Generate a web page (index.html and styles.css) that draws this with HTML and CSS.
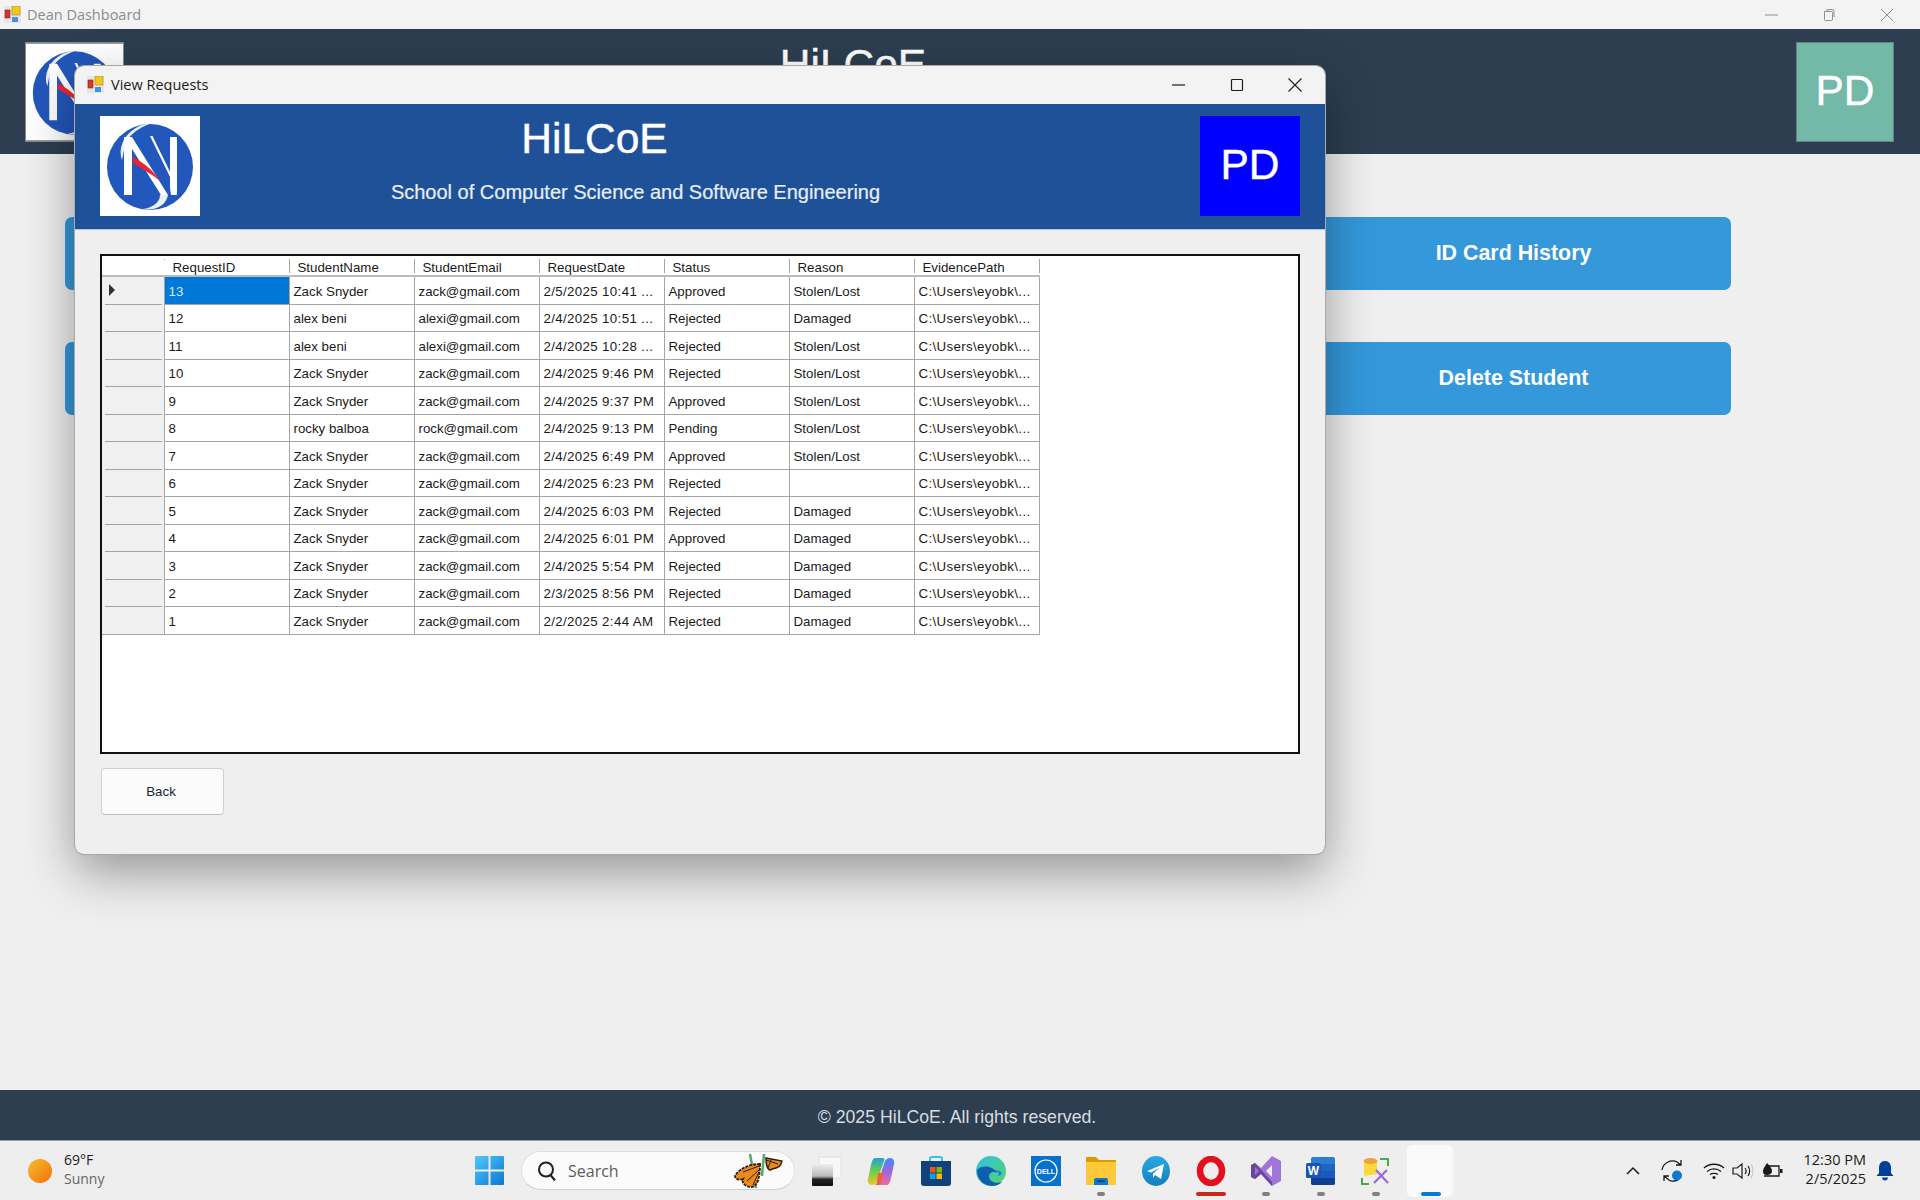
FILE: index.html
```html
<!DOCTYPE html>
<html lang="en">
<head>
<meta charset="utf-8">
<title>Dean Dashboard</title>
<link rel="stylesheet" href="styles.css">
</head>
<body>
<svg class="defs" width="0" height="0" aria-hidden="true">
  <symbol id="logo" viewBox="0 0 100 100">
    <rect width="100" height="100" fill="#fff"/>
    <ellipse cx="50" cy="51" rx="43" ry="43" fill="#2257bb"/>
    <path d="M22 44C16 26 32 8 52 7C38 12 26 20 24 34Z" fill="#e9eef8"/>
    <path d="M24 21H32L68 79H61L32 33V79H24Z" fill="#fff"/>
    <path d="M50 20H52.500L74 64H71.500Z" fill="#fff"/>
    <path d="M70 21H77V79H71L70 72Z" fill="#fff"/>
    <path d="M33 41C44 47 54 55 60 65C52 58 42 53 33 47Z" fill="#ef2330"/>
    <path d="M60 79C60 88 50 92 43 93C55 95 66 90 68 79Z" fill="#e9eef8"/>
  </symbol>
  <symbol id="appicon" viewBox="0 0 17 17">
    <rect width="17" height="17" fill="#e6e6e6"/>
    <rect x="8" y="0" width="8" height="9" fill="#f6c61e" stroke="#b08a10" stroke-width=".6"/>
    <rect x="1" y="4" width="5" height="8" fill="#d8362a" stroke="#8a2018" stroke-width=".6"/>
    <rect x="8" y="11" width="6" height="5" fill="#4a8fe0"/>
  </symbol>
</svg>

<div class="desktop">
  <div class="titlebar">
    <svg class="appicon"><use href="#appicon"/></svg>
    <span class="title-muted">Dean Dashboard</span>
    <div class="win-controls muted">
      <svg width="14" height="14" viewBox="0 0 14 14"><path d="M1 7H14" stroke="currentColor"/></svg>
      <svg width="14" height="14" viewBox="0 0 14 14"><path d="M2.5 4.5h7a1 1 0 0 1 1 1v7a1 1 0 0 1-1 1h-6a1 1 0 0 1-1-1zM5 4.500V2.500h5a2 2 0 0 1 2 2V10" transform="translate(0 -1)" fill="none" stroke="currentColor"/></svg>
      <svg width="14" height="14" viewBox="0 0 14 14"><path d="M1 1L13 13M13 1L1 13" stroke="currentColor"/></svg>
    </div>
  </div>

  <header class="app-header">
    <svg class="logo-outer"><use href="#logo"/></svg>
    <div class="app-heading"><h1>HiLCoE</h1></div>
    <div class="avatar avatar-green">PD</div>
  </header>

  <main class="dash">
    <div class="dash-btn"></div>
    <div class="dash-btn"></div>
    <div class="dash-btn">ID Card History</div>
    <div class="dash-btn"></div>
    <div class="dash-btn"></div>
    <div class="dash-btn">Delete Student</div>
  </main>

  <footer class="app-footer">© 2025 HiLCoE. All rights reserved.</footer>

  <div class="taskbar">
    <div class="weather">
      <span class="sun"></span>
      <div class="weather-text"><span>69°F</span><span class="sunny">Sunny</span></div>
    </div>
    <div class="task-center">
      <svg class="start" viewBox="0 0 30 30">
        <defs><linearGradient id="st" x1="0" y1="0" x2="1" y2="1"><stop offset="0" stop-color="#50c8fa"/><stop offset="1" stop-color="#0a78d4"/></linearGradient></defs>
        <path d="M0 1a1 1 0 0 1 1-1h13v14H0zM16 0h13a1 1 0 0 1 1 1v13H16zM0 16h14v14H1a1 1 0 0 1-1-1zM16 16h14v13a1 1 0 0 1-1 1H16z" fill="url(#st)"/>
      </svg>
      <div class="searchbox">
        <svg class="search-ic" viewBox="0 0 20 20"><circle cx="9" cy="8.500" r="7" fill="none" stroke="#222" stroke-width="2"/><path d="M13.500 14L18 19.500" stroke="#222" stroke-width="2.200"/></svg>
        <span class="search-label">Search</span>
        <svg class="butterfly" viewBox="0 0 50 34">
          <path d="M17 0L21 22L23 34M31 0L29 22" stroke="#5aa86a" stroke-width="2.500" fill="none"/>
          <path d="M27 10C18 10 6 14 2 22C2 26 8 26 10 25C8 29 13 33 18 33C25 33 27 22 27 10Z" fill="#e88a1c" stroke="#2d1c12" stroke-width="1.800" stroke-dasharray="3 1"/>
          <path d="M33 4L49 7C48 13 44 14 39 15C36 18 33 14 33 4Z" fill="#e88a1c" stroke="#2d1c12" stroke-width="1.500"/>
          <path d="M10 18L26 12M14 27L26 16M20 31L26 18M33 6L45 10M35 14L38 6" stroke="#2d1c12" fill="none"/>
        </svg>
      </div>
      <div class="task-icons">
        <div class="ti"><svg viewBox="0 0 30 30"><defs><linearGradient id="tv" x1="0" y1="0" x2="0" y2="1"><stop offset="0" stop-color="#eee"/><stop offset=".55" stop-color="#bbb"/><stop offset=".7" stop-color="#222"/><stop offset="1" stop-color="#111"/></linearGradient></defs><rect x="8" y="1" width="22" height="21" fill="#f8f8f8" stroke="#ddd"/><rect x="1" y="8" width="21" height="22" rx="1" fill="url(#tv)"/></svg></div>
        <div class="ti"><svg viewBox="0 0 30 30"><defs><linearGradient id="cp1" x1="0" y1="0" x2="0" y2="1"><stop offset="0" stop-color="#24a0d8"/><stop offset=".5" stop-color="#6ad04a"/><stop offset="1" stop-color="#f5c22a"/></linearGradient><linearGradient id="cp2" x1="0" y1="0" x2="0" y2="1"><stop offset="0" stop-color="#3a8ef0"/><stop offset=".5" stop-color="#a066e0"/><stop offset="1" stop-color="#f06aa0"/></linearGradient></defs><path d="M9 2h8c1 0 2 1 1 3L11 25c-1 3-3 4-5 4C3 29 1 26 2 23L5 9c1-4 2-7 4-7z" fill="url(#cp1)"/><path d="M21 29h-8c-1 0-2-1-1-3L19 5c1-2 3-3 5-3 3 0 5 3 4 6l-3 14c-1 4-2 7-4 7z" fill="url(#cp2)"/><path d="M12 17h6l-3 10c-1 2-2 2-3 2h-3c2-1 2-3 3-12z" fill="#f0603a"/></svg></div>
        <div class="ti"><svg viewBox="0 0 30 30"><path d="M9 6V3a2 2 0 0 1 2-2h8a2 2 0 0 1 2 2v3" fill="none" stroke="#36c0f0" stroke-width="2"/><path d="M0 5h30v22a3 3 0 0 1-3 3H3a3 3 0 0 1-3-3z" fill="#12427c"/><rect x="9" y="11" width="5.500" height="5.500" fill="#f25022"/><rect x="15.500" y="11" width="5.500" height="5.500" fill="#7fba00"/><rect x="9" y="17.500" width="5.500" height="5.500" fill="#00a4ef"/><rect x="15.500" y="17.500" width="5.500" height="5.500" fill="#ffb900"/></svg></div>
        <div class="ti"><svg viewBox="0 0 30 30"><defs><linearGradient id="ed1" x1="0" y1="0" x2="1" y2="1"><stop offset="0" stop-color="#34c0e0"/><stop offset="1" stop-color="#52d66a"/></linearGradient></defs><circle cx="15" cy="15" r="15" fill="url(#ed1)"/><path d="M1 14C1 26 10 30 16 30C21 30 24 28 26 26C20 28 14 26 13 21C12 16 18 15 22 17C17 10 6 8 1 14Z" fill="#0f5fb0"/><path d="M13 21C13 16 19 13 24 15C27 17 25 20 22 20C25 14 16 11 13 21Z" fill="#1585d8"/></svg></div>
        <div class="ti"><svg viewBox="0 0 30 30"><rect width="30" height="30" fill="#0672cb"/><circle cx="15" cy="15" r="11" fill="none" stroke="#fff" stroke-width="1.200"/><text x="15" y="17.500" class="dell-text" text-anchor="middle">DELL</text></svg></div>
        <div class="ti dot"><svg viewBox="0 0 30 30"><path d="M0 2a1 1 0 0 1 1-1h9l3 3h16a1 1 0 0 1 1 1v4H0z" fill="#d99a08"/><path d="M0 6h30v22a1 1 0 0 1-1 1H1a1 1 0 0 1-1-1z" fill="#fdc93a"/><path d="M5 29v-5a2 2 0 0 1 2-2h10a2 2 0 0 1 2 2v5z" fill="#0f78c8" transform="translate(3 0)"/><rect x="11" y="24.500" width="8" height="1.500" fill="#063f70"/></svg></div>
        <div class="ti"><svg viewBox="0 0 30 30"><defs><linearGradient id="tg" x1="0" y1="0" x2="0" y2="1"><stop offset="0" stop-color="#2aa8e0"/><stop offset="1" stop-color="#1080c0"/></linearGradient></defs><ellipse cx="15" cy="15" rx="14" ry="15" fill="url(#tg)"/><path d="M6 15L23 8L20 23L14 19L12 22L12 17.500L19 11.500L10 16.500Z" fill="#fff"/></svg></div>
        <div class="ti opera"><svg viewBox="0 0 30 30"><ellipse cx="15" cy="15" rx="11" ry="12" fill="none" stroke="#e5101e" stroke-width="6.500"/></svg></div>
        <div class="ti dot"><svg viewBox="0 0 30 30"><path d="M21 0L30 5V25L21 30L10 18L4 23L0 21V9L4 7L10 12ZM21 9L15 15L21 21Z" fill="#a074d8"/><path d="M0 9L4 7L21 26V30L10 18L4 23L0 21ZM4 11V19L8 15Z" fill="#68479c"/></svg></div>
        <div class="ti dot"><svg viewBox="0 0 30 30"><rect x="5" y="1" width="24" height="28" rx="2" fill="#2b7cd3"/><rect x="5" y="8" width="24" height="7" fill="#1e66bd"/><rect x="5" y="15" width="24" height="7" fill="#185abd"/><path d="M5 22h24v5a2 2 0 0 1-2 2H7a2 2 0 0 1-2-2z" fill="#103f91"/><rect x="0" y="7" width="15" height="15" rx="1.500" fill="#1a55b5"/><text x="7.500" y="18.500" class="word-text" text-anchor="middle">W</text></svg></div>
        <div class="ti dot"><svg viewBox="0 0 30 30"><path d="M3 5C3 2 16 2 16 5V18L3 20Z" fill="#fcd93a"/><ellipse cx="9.500" cy="5" rx="7" ry="3" fill="#f0a040"/><path d="M19 3H27V10M1 22V28H8" fill="none" stroke="#4aa84a" stroke-width="2"/><path d="M13 27L26 14M15 14L27 27" stroke="#9a6ad0" stroke-width="2.200"/></svg></div>
        <div class="ti-active"></div>
      </div>
    </div>
    <div class="tray">
      <svg class="tray-ic chev" viewBox="0 0 16 10"><path d="M2 8L8 2L14 8" fill="none" stroke="#1a1a1a" stroke-width="1.500"/></svg>
      <svg class="tray-ic sync" viewBox="0 0 24 24"><path d="M1 11C2 4 10 0 16 3L20 6M20 1V6H15M3 17L8 21C11 23 16 22 18 20M3 22V17H8" fill="none" stroke="#1a1a1a" stroke-width="1.300"/><circle cx="16" cy="16.500" r="5" fill="#0a78d4"/></svg>
      <svg class="tray-ic wifi" viewBox="0 0 22 18"><path d="M1 6C6 1 16 1 21 6M4 9.500C8 6 14 6 18 9.500M7 12.500C9 11 13 11 15 12.500" fill="none" stroke="#1a1a1a" stroke-width="1.300"/><circle cx="11" cy="15.500" r="1.500" fill="#1a1a1a"/></svg>
      <svg class="tray-ic vol" viewBox="0 0 22 18"><path d="M1 6H5L10 2V16L5 12H1Z" fill="none" stroke="#1a1a1a" stroke-width="1.200"/><path d="M13 6C14.500 8 14.500 10 13 12M16 4C18 7 18 11 16 14" fill="none" stroke="#1a1a1a" stroke-width="1.200"/><path d="M19 2C21.500 6 21.500 12 19 16" fill="none" stroke="#c8c8c8" stroke-width="1.200"/></svg>
      <svg class="tray-ic batt" viewBox="0 0 22 18"><path d="M7 4H17V14H2" fill="none" stroke="#1a1a1a" stroke-width="1.300"/><rect x="18" y="7" width="2.500" height="4" fill="#1a1a1a"/><path d="M1 10C1 6 3 5 5 1C7 3 10 6 10 9C10 12 7 13 5 13C3 13 1 12 1 10Z" fill="#1a1a1a"/></svg>
      <div class="clock"><span>12:30 PM</span><span>2/5/2025</span></div>
      <svg class="tray-ic bell" viewBox="0 0 18 20"><path d="M9 0C13 0 15 3 15 7V12L17.500 15H.5L3 12V7C3 3 5 0 9 0Z" fill="#003f9c"/><path d="M6 16.500H12C12 18 11 19.500 9 19.500C7 19.500 6 18 6 16.500Z" fill="#003f9c"/></svg>
    </div>
  </div>

  <section class="modal">
    <div class="modal-title">
      <svg class="appicon"><use href="#appicon"/></svg>
      <span>View Requests</span>
      <div class="win-controls dark">
        <svg width="14" height="14" viewBox="0 0 14 14"><path d="M0 7H13" stroke="currentColor" stroke-width="1.200"/></svg>
        <svg width="14" height="14" viewBox="0 0 14 14"><rect x="1.500" y="1.500" width="11" height="11" rx="1" fill="none" stroke="currentColor" stroke-width="1.200"/></svg>
        <svg width="14" height="14" viewBox="0 0 14 14"><path d="M.5 .5L13.500 13.500M13.500 .5L.5 13.500" stroke="currentColor" stroke-width="1.100"/></svg>
      </div>
    </div>
    <div class="modal-header">
      <svg class="logo-inner"><use href="#logo"/></svg>
      <div class="modal-heading">
        <h2>HiLCoE</h2>
        <p>School of Computer Science and Software Engineering</p>
      </div>
      <div class="avatar avatar-blue">PD</div>
    </div>
    <div class="modal-body">
      <div class="datagrid">
        <div class="row head"><div class="rh"></div><div>RequestID</div><div>StudentName</div><div>StudentEmail</div><div>RequestDate</div><div>Status</div><div>Reason</div><div>EvidencePath</div></div>
        <div class="row"><div class="rh current"></div><div class="selected">13</div><div>Zack Snyder</div><div>zack@gmail.com</div><div class="wide">2/5/2025 10:41 ...</div><div>Approved</div><div>Stolen/Lost</div><div class="wide">C:\Users\eyobk\...</div></div>
        <div class="row"><div class="rh"></div><div>12</div><div>alex beni</div><div>alexi@gmail.com</div><div class="wide">2/4/2025 10:51 ...</div><div>Rejected</div><div>Damaged</div><div class="wide">C:\Users\eyobk\...</div></div>
        <div class="row"><div class="rh"></div><div>11</div><div>alex beni</div><div>alexi@gmail.com</div><div class="wide">2/4/2025 10:28 ...</div><div>Rejected</div><div>Stolen/Lost</div><div class="wide">C:\Users\eyobk\...</div></div>
        <div class="row"><div class="rh"></div><div>10</div><div>Zack Snyder</div><div>zack@gmail.com</div><div class="wide">2/4/2025 9:46 PM</div><div>Rejected</div><div>Stolen/Lost</div><div class="wide">C:\Users\eyobk\...</div></div>
        <div class="row"><div class="rh"></div><div>9</div><div>Zack Snyder</div><div>zack@gmail.com</div><div class="wide">2/4/2025 9:37 PM</div><div>Approved</div><div>Stolen/Lost</div><div class="wide">C:\Users\eyobk\...</div></div>
        <div class="row"><div class="rh"></div><div>8</div><div>rocky balboa</div><div>rock@gmail.com</div><div class="wide">2/4/2025 9:13 PM</div><div>Pending</div><div>Stolen/Lost</div><div class="wide">C:\Users\eyobk\...</div></div>
        <div class="row"><div class="rh"></div><div>7</div><div>Zack Snyder</div><div>zack@gmail.com</div><div class="wide">2/4/2025 6:49 PM</div><div>Approved</div><div>Stolen/Lost</div><div class="wide">C:\Users\eyobk\...</div></div>
        <div class="row"><div class="rh"></div><div>6</div><div>Zack Snyder</div><div>zack@gmail.com</div><div class="wide">2/4/2025 6:23 PM</div><div>Rejected</div><div></div><div class="wide">C:\Users\eyobk\...</div></div>
        <div class="row"><div class="rh"></div><div>5</div><div>Zack Snyder</div><div>zack@gmail.com</div><div class="wide">2/4/2025 6:03 PM</div><div>Rejected</div><div>Damaged</div><div class="wide">C:\Users\eyobk\...</div></div>
        <div class="row"><div class="rh"></div><div>4</div><div>Zack Snyder</div><div>zack@gmail.com</div><div class="wide">2/4/2025 6:01 PM</div><div>Approved</div><div>Damaged</div><div class="wide">C:\Users\eyobk\...</div></div>
        <div class="row"><div class="rh"></div><div>3</div><div>Zack Snyder</div><div>zack@gmail.com</div><div class="wide">2/4/2025 5:54 PM</div><div>Rejected</div><div>Damaged</div><div class="wide">C:\Users\eyobk\...</div></div>
        <div class="row"><div class="rh"></div><div>2</div><div>Zack Snyder</div><div>zack@gmail.com</div><div class="wide">2/3/2025 8:56 PM</div><div>Rejected</div><div>Damaged</div><div class="wide">C:\Users\eyobk\...</div></div>
        <div class="row"><div class="rh"></div><div>1</div><div>Zack Snyder</div><div>zack@gmail.com</div><div class="wide">2/2/2025 2:44 AM</div><div>Rejected</div><div>Damaged</div><div class="wide">C:\Users\eyobk\...</div></div>
      </div>
      <button class="back" type="button">Back</button>
    </div>
  </section>
</div>
</body>
</html>
```
FILE: styles.css
```css
* { box-sizing: border-box; }
html, body { margin: 0; padding: 0; }
body { font-family: "Liberation Sans", Arial, sans-serif; background: #efefef; overflow: hidden; }
.defs { position: absolute; }

.desktop { position: relative; width: 1920px; height: 1200px; display: flex; flex-direction: column; overflow: hidden; }

.titlebar { height: 29px; flex: none; display: flex; align-items: center; padding-left: 4px; background: #f3f3f3; }
.appicon { width: 17px; height: 17px; flex: none; }
.title-muted { margin-left: 6px; font: 14.5px "Open Sans", sans-serif; color: #8c8c8c; }
.win-controls { margin-left: auto; display: flex; }
.win-controls.muted { color: #8f8f8f; gap: 44px; padding-right: 26px; }
.win-controls.dark { color: #1c1c1c; gap: 44px; padding-right: 23px; }

.app-header { height: 125px; flex: none; display: flex; align-items: center; padding: 0 26px 0 25px; background: #2c3e50; }
.logo-outer { width: 99px; height: 100px; flex: none; border: 1px solid #8a8a8a; }
.app-heading { flex: 1; align-self: flex-start; text-align: center; padding: 13px 214px 0 0; }
.app-heading h1 { margin: 0; font-size: 42.500px; font-weight: 400; color: #fff; line-height: 46px; -webkit-text-stroke: .4px #fff; }
.avatar { width: 100px; height: 100px; flex: none; display: flex; align-items: center; justify-content: center; padding-bottom: 2px; color: #fff; font-size: 42.500px; -webkit-text-stroke: .4px #fff; }
.avatar-green { background: #72b9a8; border: 1px solid #6a7f80; width: 98px; }
.avatar-blue { background: #0000ff; }

.dash { flex: 1; display: grid; grid-template-columns: repeat(3, 434px); grid-auto-rows: 73px; column-gap: 182px; row-gap: 52px; padding: 63px 0 0 65px; align-content: start; }
.dash-btn { background: #3498db; border-radius: 7px; display: flex; align-items: center; justify-content: center; padding-right: 1px; color: #fff; font-size: 21.400px; font-weight: 700; }

.app-footer { height: 51px; flex: none; background: #2c3e50; color: #d9dde0; font-size: 17.700px; display: flex; align-items: center; justify-content: center; padding: 4px 6px 0 0; border-bottom: 1px solid #9a9fa5; }

.taskbar { height: 59px; flex: none; display: flex; align-items: center; position: relative; background: #eeeeee; }
.weather { width: 475px; display: flex; align-items: center; padding-left: 28px; flex: none; }
.sun { width: 24px; height: 24px; border-radius: 50%; background: linear-gradient(135deg, #f2c12e, #f56d0a); }
.weather-text { display: flex; flex-direction: column; margin: -3px 0 0 12px; font: 14px/19px "Open Sans", sans-serif; color: #1c1c1c; }
.sunny { color: #666; }
.task-center { display: flex; align-items: center; flex: none; }
.start { width: 29px; height: 29px; flex: none; }
.searchbox { width: 274px; height: 39px; margin-left: 17px; flex: none; display: flex; align-items: center; padding-left: 15px; background: #fbfbfb; border: 1px solid #e0e0e0; border-bottom-color: #cfcfcf; border-radius: 20px; }
.search-ic { width: 20px; height: 20px; flex: none; }
.search-label { margin-left: 11px; font: 16px "Open Sans", sans-serif; color: #5c5c5c; }
.butterfly { width: 50px; height: 34px; margin-left: auto; margin-right: 11px; }
.task-icons { display: flex; align-items: center; margin-left: 16px; position: relative; }
.ti { width: 30px; height: 30px; margin-right: 25px; flex: none; position: relative; }
.ti svg { display: block; width: 30px; height: 30px; }
.ti.dot::after { content: ""; position: absolute; left: 11px; bottom: -10px; width: 8px; height: 4px; border-radius: 2px; background: #808080; }
.ti.opera::after { content: ""; position: absolute; left: 0; bottom: -10px; width: 30px; height: 4px; border-radius: 2px; background: #c42b1c; }
.ti-active { width: 45px; height: 52px; margin-left: -9px; flex: none; position: relative; background: #fafafa; border-radius: 5px; box-shadow: 2px 0 0 #f4f4f4; }
.ti-active::after { content: ""; position: absolute; left: 14px; bottom: 1px; width: 20px; height: 4px; border-radius: 2px; background: #0a78d4; }
.dell-text { font: 700 7px "Liberation Sans", sans-serif; fill: #fff; }
.word-text { font: 700 12px "Liberation Sans", sans-serif; fill: #fff; }

.tray { margin-left: auto; display: flex; align-items: center; padding-right: 26px; }
.tray-ic { flex: none; display: block; }
.chev { width: 16px; height: 10px; margin-right: 20px; }
.sync { width: 24px; height: 24px; margin-right: 18px; }
.wifi { width: 22px; height: 18px; margin-right: 7px; }
.vol { width: 22px; height: 18px; margin-right: 8px; }
.batt { width: 22px; height: 18px; margin-right: 19px; }
.clock { display: flex; flex-direction: column; align-items: flex-end; margin: -3px 10px 0 0; font: 14.500px/19px "Open Sans", sans-serif; color: #1c1c1c; }
.bell { width: 18px; height: 20px; }

.modal { position: absolute; left: 75px; top: 66px; width: 1250px; height: 788px; display: flex; flex-direction: column; background: #efefef; border-radius: 9px; outline: 1px solid #a8a8a8; box-shadow: 0 18px 50px rgba(0, 0, 0, .38); }
.modal-title { height: 38px; flex: none; display: flex; align-items: center; padding: 0 0 2px 12px; background: #f3f3f3; border-radius: 9px 9px 0 0; font: 14.500px "Open Sans", sans-serif; color: #1c1c1c; }
.modal-title span { margin-left: 7px; }
.modal-title .win-controls { padding-top: 2px; }
.modal-header { height: 126px; flex: none; display: flex; align-items: center; padding: 0 25px 1px; background: #1f5199; border-bottom: 1px solid #b5c4d8; }
.logo-inner { width: 100px; height: 100px; flex: none; }
.modal-heading { flex: 1; align-self: flex-start; display: flex; flex-direction: column; align-items: center; color: #fff; padding: 12px 129px 0 0; }
.modal-heading h2 { margin: 0 82px 0 0; font-size: 42.500px; font-weight: 400; line-height: 46px; -webkit-text-stroke: .4px #fff; }
.modal-heading p { margin: 17px 0 0; font-size: 20px; line-height: 26px; color: #e8eef6; -webkit-text-stroke: .2px #e8eef6; }

.modal-body { flex: 1; display: flex; flex-direction: column; padding: 24px 25px 0; border-radius: 0 0 9px 9px; }
.datagrid { height: 500px; flex: none; padding: 0; background: #fff; border: 2px solid #111; font-size: 13.300px; color: #1a1a1a; }
.row { display: grid; grid-template-columns: 63px repeat(7, 125px); height: 27.500px; width: 938px; }
.row > div { padding: 5.500px 0 0 3.500px; border-right: 1px solid #a5a5a5; border-bottom: 1px solid #a5a5a5; white-space: nowrap; overflow: hidden; line-height: 18px; }
.row > .wide { letter-spacing: .35px; }
.row.head { height: 21px; }
.row.head > div { padding: 4px 0 0 7.500px; border-right: 0; border-bottom: 2px solid #bcbcbc; position: relative; line-height: 16px; }
.row.head > div::after { content: ""; position: absolute; right: 0; top: 3px; bottom: 2px; width: 1px; background: #a5a5a5; }
.row > .rh { position: relative; border-bottom: 0; background: #f0f0f0; padding: 0; }
.row > .rh::after { content: ""; position: absolute; left: 3px; right: 2px; bottom: 0; height: 1px; background: #a5a5a5; }
.row:last-child > .rh::after { left: 0; right: 0; }
.row.head > .rh { background: #fff; border-bottom: 2px solid #bcbcbc; }
.row.head > .rh::after { left: auto; right: 0; }
.rh.current::before { content: ""; position: absolute; left: 7px; top: 7px; border-left: 6px solid #333; border-top: 6px solid transparent; border-bottom: 6px solid transparent; }
.row > .selected { background: #0078d7; color: #d7ecff; }
.back { width: 123px; height: 47px; margin: 14px 0 0 1px; padding: 0 3px 0 0; background: #fbfbfb; border: 1px solid #d0d0d0; border-bottom-color: #bdbdbd; border-radius: 4px; font: 13.300px "Liberation Sans", sans-serif; color: #1f2233; }
```
